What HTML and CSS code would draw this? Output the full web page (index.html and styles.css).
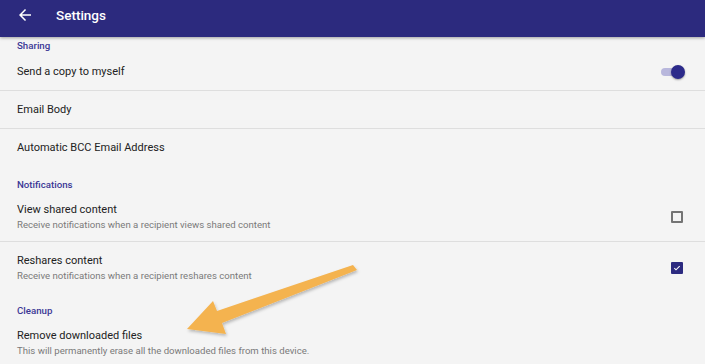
FILE: index.html
```html
<!DOCTYPE html>
<html lang="en">

<head>
    <meta charset="UTF-8">
    <title>Settings</title>
    <link rel="stylesheet" href="styles.css">
</head>

<body>
    <div class="app_bar">
        <svg class="back_icon" width="18" height="18" viewBox="0 0 24 24">
            <path d="M20 11H7.83l5.59-5.59L12 4l-8 8 8 8 1.41-1.41L7.83 13H20v-2z" fill="#fff"/>
        </svg>
        <span class="app_title">Settings</span>
    </div>

    <div class="content">
        <div class="section_title first">Sharing</div>
        <div class="pref single divided">
            <span class="pref_title">Send a copy to myself</span>
            <div class="toggle"><div class="toggle_track"></div><div class="toggle_thumb"></div></div>
        </div>
        <div class="pref single divided">
            <span class="pref_title">Email Body</span>
        </div>
        <div class="pref single tall">
            <span class="pref_title">Automatic BCC Email Address</span>
        </div>

        <div class="section_title">Notifications</div>
        <div class="pref double divided">
            <div class="pref_text">
                <div class="pref_title">View shared content</div>
                <div class="pref_sub">Receive notifications when a recipient views shared content</div>
            </div>
            <div class="checkbox"></div>
        </div>
        <div class="pref double">
            <div class="pref_text">
                <div class="pref_title">Reshares content</div>
                <div class="pref_sub">Receive notifications when a recipient reshares content</div>
            </div>
            <div class="checkbox checked">
                <svg width="10" height="10" viewBox="0 0 24 24">
                    <path d="M4 12.5l5 5L20 6.5" stroke="#fff" stroke-width="3.2" fill="none"/>
                </svg>
            </div>
        </div>

        <div class="section_title cleanup">Cleanup</div>
        <div class="pref double">
            <div class="pref_text">
                <div class="pref_title">Remove downloaded files</div>
                <div class="pref_sub">This will permanently erase all the downloaded files from this device.</div>
            </div>
        </div>
    </div>

    <!-- annotation arrow drawn over the screenshot -->
    <svg class="annotation" width="705" height="364" viewBox="0 0 705 364">
        <defs>
            <filter id="arrow_shadow" x="-10%" y="-10%" width="120%" height="130%">
                <feDropShadow dx="1" dy="2" stdDeviation="1.5" flood-color="#000" flood-opacity="0.25"/>
            </filter>
        </defs>
        <polygon points="353,265 357,270 222,323 226,334 187,329 213,301 217,311" fill="#f4b350" filter="url(#arrow_shadow)"/>
    </svg>
</body>

</html>
```

FILE: styles.css
```css
* {
    margin: 0;
    padding: 0;
    box-sizing: border-box;
    font-family: Roboto, "Noto Sans", Arial, sans-serif;
}

body {
    width: 705px;
    height: 364px;
    overflow: hidden;
    background-color: #f4f4f4;
    position: relative;
}

.app_bar {
    height: 37px;
    background-color: #2c2a7e;
    display: flex;
    align-items: center;
    padding-left: 16px;
    padding-bottom: 7px;
    box-shadow: 0 1px 3px rgba(0, 0, 0, 0.35);
    position: relative;
    z-index: 1;
}

.back_icon {
    margin-right: 22px;
}

.app_title {
    color: #fff;
    font-size: 13.5px;
    font-weight: 500;
}

.section_title {
    padding: 11px 17px 0;
    height: 24px;
    line-height: 14px;
    font-size: 9.7px;
    font-weight: 500;
    color: #3b3896;
}

.section_title.first {
    padding-top: 2px;
    height: 16px;
}

.section_title.cleanup {
    padding-top: 12px;
    height: 25px;
}

.pref {
    display: flex;
    align-items: center;
    justify-content: space-between;
    padding: 0 22px 0 17px;
}

.pref.single {
    height: 37px;
}

.pref.single.tall {
    height: 38px;
}

.pref.double {
    padding-top: 11px;
    padding-bottom: 10px;
}

.pref.divided {
    border-bottom: 1px solid #dedede;
}

.pref.single.divided {
    height: 38px;
}

.pref_title {
    font-size: 11px;
    line-height: 16px;
    color: #222;
}

.pref_sub {
    font-size: 9.6px;
    line-height: 13px;
    color: #7a7a7a;
}

.toggle {
    position: relative;
    width: 24px;
    height: 14px;
    margin-right: -2px;
}

.toggle_track {
    position: absolute;
    left: 0;
    top: 3px;
    width: 22px;
    height: 8px;
    border-radius: 4px;
    background-color: #b8b7dc;
}

.toggle_thumb {
    position: absolute;
    right: 0;
    top: 0;
    width: 14px;
    height: 14px;
    border-radius: 50%;
    background-color: #2c2a8a;
    box-shadow: 0 1px 2px rgba(0, 0, 0, 0.35);
}

.checkbox {
    width: 12px;
    height: 12px;
    border: 2px solid #747474;
    border-radius: 1px;
    display: flex;
    align-items: center;
    justify-content: center;
}

.checkbox.checked {
    border-color: #2c2a80;
    background-color: #2c2a80;
}

.annotation {
    position: absolute;
    left: 0;
    top: 0;
    pointer-events: none;
    z-index: 2;
}
```
